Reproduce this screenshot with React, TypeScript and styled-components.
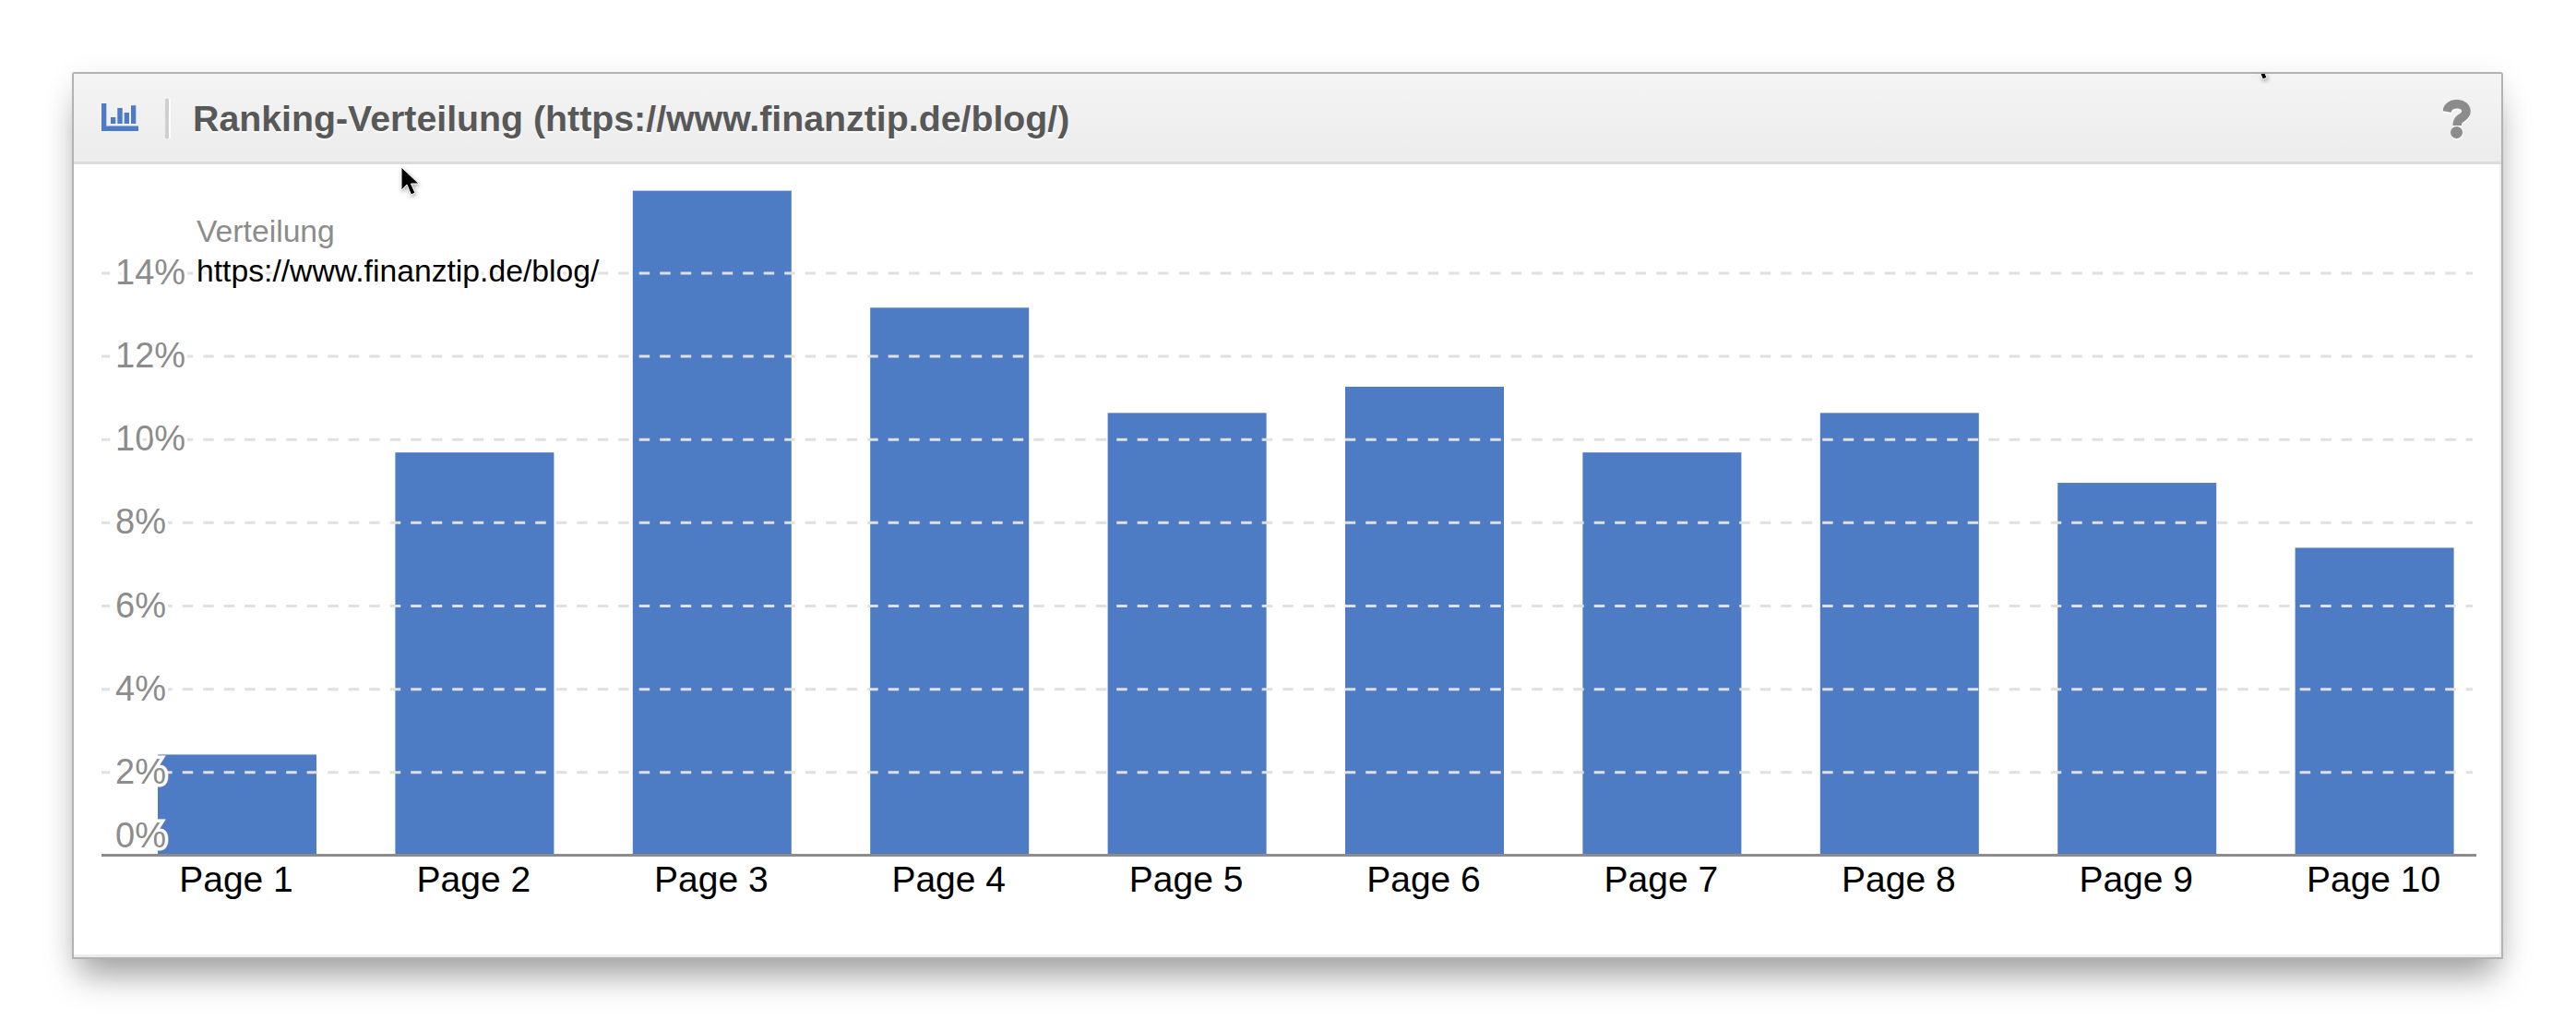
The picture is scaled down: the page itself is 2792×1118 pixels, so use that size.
import * as React from "react";

import styled, { createGlobalStyle } from "styled-components";

const GlobalStyle = createGlobalStyle`
  html, body {
    margin: 0;
    padding: 0;
    background: #fff;
  }
  body {
    font-family: "Liberation Sans", Arial, sans-serif;
  }
`;

const Page = styled.div`
  width: 2792px;
  height: 1118px;
  padding: 78px 79px 79px 78px;
  box-sizing: border-box;
  overflow: hidden;
`;

const Card = styled.section`
  position: relative;
  height: 961px;
  box-sizing: border-box;
  display: flex;
  flex-direction: column;
  border: 2px solid #b2b2b2;
  border-radius: 3px 3px 0 0;
  background: #fff;
  box-shadow: 0 26px 34px -8px rgba(0, 0, 0, 0.34), 0 4px 34px rgba(0, 0, 0, 0.07);
`;

const Header = styled.header`
  height: 98px;
  flex: none;
  box-sizing: border-box;
  display: flex;
  align-items: center;
  padding: 2px 33px 0 30px;
  background: linear-gradient(#f4f4f4, #ececec);
  border-bottom: 3px solid #dcdcdc;
`;

const ChartIcon = styled.svg`
  width: 40px;
  height: 30px;
  flex: none;
  margin-top: -3px;
  color: #4d7cc4;
`;

const Separator = styled.span`
  width: 4px;
  height: 43px;
  flex: none;
  margin: 0 26px 0 29px;
  background: #cfcfcf;
  box-shadow: 2px 0 0 #fff;
`;

const Title = styled.h1`
  flex: 1;
  margin: 0;
  font-size: 39.3px;
  font-weight: 700;
  color: #585858;
  text-shadow: 0 2px 0 #fff;
  white-space: nowrap;
`;

const HelpIcon = styled.svg`
  width: 30px;
  height: 42px;
  flex: none;
  color: #8c8c8c;
  filter: drop-shadow(0 2px 0 #fff);
`;

const ChartBody = styled.div`
  flex: 1;
  box-shadow: inset -2px 0 0 #f0f0f0, inset 0 -3px 0 #ececec;
`;

const ChartSvg = styled.svg`
  display: block;
  width: 2631px;
  height: 859px;
  font-family: "Liberation Sans", Arial, sans-serif;
`;

const GridLine = styled.line`
  stroke: #e0e0e0;
  stroke-width: 3;
  stroke-dasharray: 11.5 11;
  stroke-dashoffset: 2.3;
`;

const TickLabel = styled.text`
  font-size: 38px;
  fill: #8c8c8c;
  stroke: #fff;
  stroke-width: 7px;
  stroke-linejoin: miter;
  paint-order: stroke;
`;

const LegendText = styled.text<{ $muted?: boolean }>`
  font-size: 33.7px;
  fill: ${props => (props.$muted ? "#8c8c8c" : "#000")};
  stroke: #fff;
  stroke-width: 6px;
  paint-order: stroke;
`;

const PageLabel = styled.text`
  font-size: 39px;
  fill: #000;
  text-anchor: middle;
`;

const Cursor = styled.svg<{ $left: number; $top: number; $width: number; $height: number }>`
  position: absolute;
  left: ${props => props.$left}px;
  top: ${props => props.$top}px;
  width: ${props => props.$width}px;
  height: ${props => props.$height}px;
  overflow: hidden;
  filter: drop-shadow(1px 2px 2px rgba(0, 0, 0, 0.35));
`;

const CHART_TITLE = "Ranking-Verteilung (https://www.finanztip.de/blog/)";
const SITE_URL = "https://www.finanztip.de/blog/";

const VALUES = [2.43, 9.69, 15.98, 13.17, 10.64, 11.27, 9.69, 10.64, 8.96, 7.4];
const TICKS = [14, 12, 10, 8, 6, 4, 2];

const BASE_Y = 927;
const PX_PER_PERCENT = 45.08;
const BAR_LEFT = 171;
const BAR_STEP = 257.4;
const BAR_WIDTH = 172;

const yFor = (value: number) => BASE_Y - value * PX_PER_PERCENT;

const ArrowPath = "M1 1 L1 26 L7 20 L11.5 31 L16 29 L11.5 19 L20 19 Z";

const App: React.FC = () => (
  <>
    <GlobalStyle />
    <Page>
      <Card>
        <Header>
          <ChartIcon viewBox="0 0 40 30">
            <path
              fill="currentColor"
              d="M0 0h5.3v24.4H40V30H0zM10 15h5.3v7H10zM17.3 5h5.4v17h-5.4zM24.7 10H30v12h-5.3zM32 2.3h5.3V22H32z"
            />
          </ChartIcon>
          <Separator />
          <Title>{CHART_TITLE}</Title>
          <HelpIcon viewBox="0 0 30 42">
            <path
              fill="none"
              stroke="currentColor"
              strokeWidth="9.5"
              d="M4 13C5 7 9.500 4.700 15 4.700c6 0 10 3.500 10 8 0 5.300-5.500 6.300-8 9.300-1.200 1.500-1.800 3-1.800 6"
            />
            <circle cx="14.500" cy="35.500" r="6.500" fill="currentColor" />
          </HelpIcon>
        </Header>
        <ChartBody>
          <ChartSvg viewBox="80 178 2631 859">
            {VALUES.map((value, i) => (
              <rect
                key={i}
                x={BAR_LEFT + i * BAR_STEP}
                y={yFor(value)}
                width={BAR_WIDTH}
                height={BASE_Y - yFor(value)}
                fill="#4d7cc4"
              />
            ))}
            {TICKS.map(tick => (
              <GridLine key={tick} x1={110} x2={2680} y1={yFor(tick)} y2={yFor(tick)} />
            ))}
            <rect x={110} y={925} width={2574} height={3} fill="#8c8c8c" />
            {TICKS.map(tick => (
              <TickLabel key={tick} x={125} y={yFor(tick) + 12}>
                {tick}%
              </TickLabel>
            ))}
            <TickLabel x={125} y={918}>
              0%
            </TickLabel>
            <LegendText x={213} y={262} $muted>
              Verteilung
            </LegendText>
            <LegendText x={213} y={305}>
              {SITE_URL}
            </LegendText>
            {VALUES.map((_, i) => (
              <PageLabel key={i} x={BAR_LEFT + BAR_WIDTH / 2 + i * BAR_STEP - 1} y={966}>
                Page {i + 1}
              </PageLabel>
            ))}
          </ChartSvg>
        </ChartBody>
        <Cursor viewBox="0 0 21 32" $left={354} $top={100} $width={21} $height={32}>
          <path d={ArrowPath} fill="#000" stroke="#fff" strokeWidth="1" />
        </Cursor>
        <Cursor viewBox="0 25 21 6" $left={2361} $top={0} $width={21} $height={6}>
          <path d={ArrowPath} fill="#000" stroke="#fff" strokeWidth="1" />
        </Cursor>
      </Card>
    </Page>
  </>
);

export default App;
